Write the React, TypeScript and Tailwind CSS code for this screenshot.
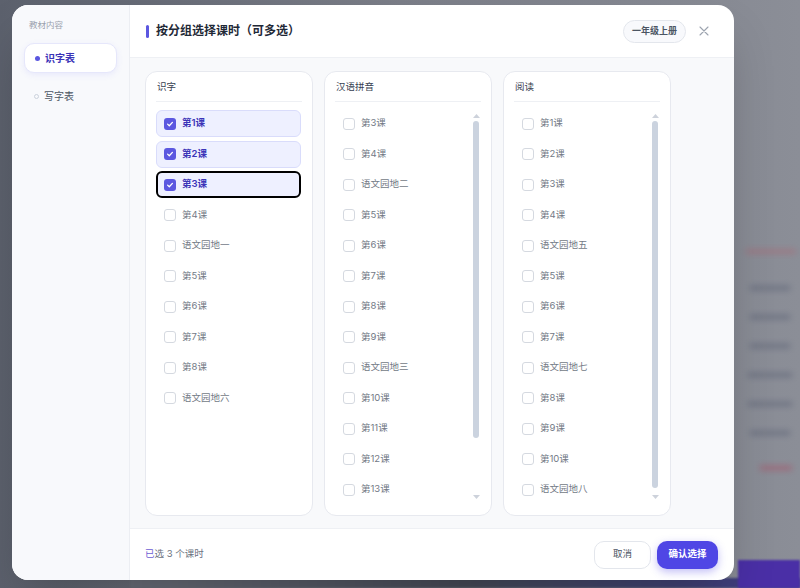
import { useState } from "react";

type Group = { title: string; items: string[]; scroll?: { thumbEnd: number } };

const groups: Group[] = [
  {
    title: "识字",
    items: ["第1课", "第2课", "第3课", "第4课", "语文园地一", "第5课", "第6课", "第7课", "第8课", "语文园地六"],
  },
  {
    title: "汉语拼音",
    items: ["第3课", "第4课", "语文园地二", "第5课", "第6课", "第7课", "第8课", "第9课", "语文园地三", "第10课", "第11课", "第12课", "第13课"],
    scroll: { thumbEnd: 317 },
  },
  {
    title: "阅读",
    items: ["第1课", "第2课", "第3课", "第4课", "语文园地五", "第5课", "第6课", "第7课", "语文园地七", "第8课", "第9课", "第10课", "语文园地八"],
    scroll: { thumbEnd: 367 },
  },
];

function Check({ on }: { on: boolean }) {
  if (!on) return <span className="h-[12px] w-[12px] shrink-0 rounded-[3px] border border-[#d5d9e0] bg-white" />;
  return (
    <span className="flex h-[12px] w-[12px] shrink-0 items-center justify-center rounded-[3px] bg-[#5b57e0]">
      <svg width="8" height="8" viewBox="0 0 8 8" fill="none">
        <path d="M1.6 4.1 3.3 5.7 6.4 2.4" stroke="white" strokeWidth="1.3" strokeLinecap="round" strokeLinejoin="round" />
      </svg>
    </span>
  );
}

function Row({ label, on, focus, onToggle }: { label: string; on: boolean; focus?: boolean; onToggle: () => void }) {
  const box = focus
    ? "border-2 border-black bg-[#eef0ff] pl-[6px] rounded-[6px]"
    : on
      ? "border border-[#d9dcfb] bg-[#eef0ff] pl-[7px] rounded-[6px]"
      : "border border-transparent pl-[7px]";
  return (
    <div onClick={onToggle} className={`flex h-[27px] shrink-0 cursor-pointer items-center gap-[6px] ${box}`}>
      <Check on={on} />
      <span className={on ? "text-[9.5px] font-semibold text-[#3b34b8]" : "text-[9.5px] text-[#737a86]"}>{label}</span>
    </div>
  );
}

function Scrollbar({ thumbEnd }: { thumbEnd: number }) {
  return (
    <div className="mr-[12px] flex w-[6px] shrink-0 flex-col items-center pt-[4px]">
      <svg width="7" height="4" viewBox="0 0 7 4">
        <path d="M3.5 0 7 4H0z" fill="#cdd2db" />
      </svg>
      <div className="mt-[3px] w-[6px] rounded-full bg-[#cbd3df]" style={{ height: thumbEnd }} />
      <div className="flex-1" />
      <svg width="7" height="4" viewBox="0 0 7 4" className="mb-[16px]">
        <path d="M0 0h7L3.5 4z" fill="#cdd2db" />
      </svg>
    </div>
  );
}

export default function App() {
  const [picked, setPicked] = useState<Record<string, boolean>>({ "0-0": true, "0-1": true, "0-2": true });
  const count = Object.values(picked).filter(Boolean).length;
  const toggle = (k: string) => setPicked((p) => ({ ...p, [k]: !p[k] }));

  return (
    <div className="relative h-[588px] w-[800px] overflow-hidden bg-[#7e818b] font-['Inter','Noto_Sans_CJK_SC',sans-serif]">
      {/* blurred page behind the overlay */}
      <div className="absolute inset-0 bg-gradient-to-r from-[#5c616d] via-[#7b7e88] to-[#8b8e97]" />
      <div className="absolute left-[740px] top-[250px] flex w-[60px] flex-col gap-[19px] opacity-70 blur-[3px]">
        <div className="ml-[6px] h-[3px] w-[50px] bg-[#b0606e]" />
        <div className="ml-[10px] mt-[14px] h-[4px] w-[40px] bg-[#5a6174]" />
        <div className="ml-[10px] mt-[6px] h-[4px] w-[40px] bg-[#5a6174]" />
        <div className="ml-[10px] mt-[6px] h-[4px] w-[40px] bg-[#5a6174]" />
        <div className="ml-[8px] mt-[6px] h-[4px] w-[44px] bg-[#5a6174]" />
        <div className="ml-[8px] mt-[6px] h-[4px] w-[44px] bg-[#5a6174]" />
        <div className="ml-[10px] mt-[6px] h-[4px] w-[40px] bg-[#5a6174]" />
        <div className="ml-[20px] mt-[12px] h-[4px] w-[32px] bg-[#a84f66]" />
      </div>
      <div className="absolute bottom-0 left-[130px] right-0 h-[10px] bg-gradient-to-r from-[#6b6f7a] via-[#474b58] to-[#3e3a86] blur-[1px]" />
      <div className="absolute bottom-0 left-[738px] right-0 h-[28px] bg-[#4a2fa6] blur-[1px]" />

      {/* dialog */}
      <div className="absolute left-[12px] top-[5px] flex h-[575px] w-[722px] overflow-hidden rounded-[16px] bg-white shadow-2xl">
        <aside className="flex w-[118px] shrink-0 flex-col border-r border-[#eceef3] bg-[#f8f9fc] px-[12px] pt-[14px]">
          <div className="pl-[5px] text-[8.5px] leading-[12px] text-[#9aa1ad]">教材内容</div>
          <div className="mt-[12px] flex h-[30px] items-center gap-[5px] rounded-[10px] border border-[#e6e7fb] bg-white pl-[10px] shadow-[0_2px_6px_rgba(99,102,241,0.10)]">
            <span className="h-[5px] w-[5px] rounded-full bg-[#5b57e0]" />
            <span className="text-[10px] font-semibold text-[#3b34b8]">识字表</span>
          </div>
          <div className="mt-[8px] flex h-[30px] items-center gap-[5px] pl-[10px]">
            <span className="h-[5px] w-[5px] rounded-full border border-[#cbd2dc]" />
            <span className="text-[10px] text-[#4b5563]">写字表</span>
          </div>
        </aside>

        <main className="flex min-w-0 flex-1 flex-col">
          <header className="flex h-[53px] shrink-0 items-center border-b border-[#eef0f4] pl-[16px] pr-[25px]">
            <span className="h-[13px] w-[3px] rounded-full bg-[#5b57e0]" />
            <h1 className="ml-[7px] text-[12px] font-bold text-[#1f2937]">按分组选择课时（可多选）</h1>
            <div className="ml-auto flex h-[23px] items-center rounded-full border border-[#e3e6ec] bg-[#f8f9fc] px-[8px] text-[9px] font-bold text-[#4b5563]">
              一年级上册
            </div>
            <svg className="ml-[13px]" width="10" height="10" viewBox="0 0 10 10">
              <path d="M1 1l8 8M9 1 1 9" stroke="#9ca3af" strokeWidth="1.1" strokeLinecap="round" />
            </svg>
          </header>

          <section className="flex h-[470px] shrink-0 gap-[11px] bg-[#f8f9fb] pl-[15px] pt-[13px]">
            {groups.map((g, gi) => (
              <div key={g.title} className="flex h-[445px] w-[168px] flex-col rounded-[12px] border border-[#e7e9ef] bg-white">
                <div className="px-[11px] pb-[8px] pt-[9px] text-[9.5px] leading-[12px] text-[#374151]">{g.title}</div>
                <div className="mx-[10px] h-px bg-[#eef0f4]" />
                <div className="flex min-h-0 flex-1 pt-[8px]">
                  <div className="flex min-w-0 flex-1 flex-col gap-[3.5px] overflow-hidden pl-[10px] pr-[11px]">
                    {g.items.map((it, ii) => {
                      const k = `${gi}-${ii}`;
                      return <Row key={k} label={it} on={!!picked[k]} focus={k === "0-2"} onToggle={() => toggle(k)} />;
                    })}
                  </div>
                  {g.scroll && <Scrollbar thumbEnd={g.scroll.thumbEnd} />}
                </div>
              </div>
            ))}
          </section>

          <footer className="flex h-[52px] shrink-0 items-center border-t border-[#eef0f4] pl-[15px] pr-[16px]">
            <span className="text-[9.5px] text-[#6b7280]">
              <span className="text-[#6d5dd3]">已</span>选 {count} 个课时
            </span>
            <button className="ml-auto h-[28px] w-[57px] rounded-[10px] border border-[#e3e6ec] bg-white text-[9.5px] text-[#4b5563]">
              取消
            </button>
            <button className="ml-[6px] h-[28px] w-[61px] rounded-[10px] bg-[#4f46e5] text-[9.5px] font-bold text-white shadow-[0_3px_8px_rgba(79,70,229,0.35)]">
              确认选择
            </button>
          </footer>
        </main>
      </div>
    </div>
  );
}
